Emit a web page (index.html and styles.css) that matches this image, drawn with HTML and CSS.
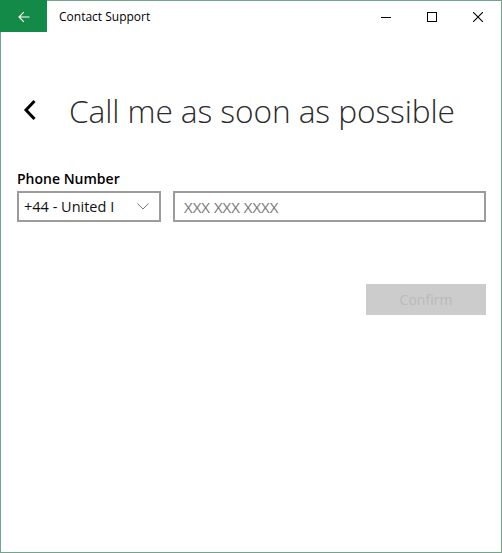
FILE: index.html
```html
<!DOCTYPE html>
<html lang="en">
<head>
<meta charset="utf-8">
<title>Contact Support</title>
<link rel="stylesheet" href="styles.css">
</head>
<body>
<div class="window">
  <header class="titlebar">
    <div class="back-btn">
      <svg width="12" height="12" viewBox="0 0 12 12"><path d="M11.5 6H1M5.8 1.2L1 6l4.8 4.8" fill="none" stroke="#fff" stroke-width="1.2"/></svg>
    </div>
    <div class="app-title">Contact Support</div>
    <div class="controls">
      <div class="ctl"><svg width="10" height="10" viewBox="0 0 10 10"><path d="M0 5.5h10" stroke="#000" stroke-width="1"/></svg></div>
      <div class="ctl"><svg width="10" height="10" viewBox="0 0 10 10"><rect x="0.5" y="0.5" width="9" height="9" fill="none" stroke="#000" stroke-width="1"/></svg></div>
      <div class="ctl"><svg width="10" height="10" viewBox="0 0 10 10"><path d="M0 0L10 10M10 0L0 10" stroke="#000" stroke-width="1.1"/></svg></div>
    </div>
  </header>
  <main class="content">
    <div class="heading-row">
      <svg class="chev" width="14" height="22" viewBox="0 0 14 22"><path d="M11.5 2L3 11l8.5 9" fill="none" stroke="#000" stroke-width="3"/></svg>
      <h1 class="heading">Call me as soon as possible</h1>
    </div>
    <div class="label">Phone Number</div>
    <div class="fields">
      <div class="select">
        <span class="select-text">+44 - United I</span>
        <svg width="12" height="7" viewBox="0 0 12 7"><path d="M0.5 0.5L6 6l5.5-5.5" fill="none" stroke="#777" stroke-width="1"/></svg>
      </div>
      <div class="input"><span class="placeholder">XXX XXX XXXX</span></div>
    </div>
    <div class="actions">
      <div class="confirm">Confirm</div>
    </div>
  </main>
</div>
</body>
</html>
```
FILE: styles.css
```css
html, body {
  margin: 0;
  padding: 0;
  background: #fff;
}
body {
  font-family: "Open Sans", "Noto Sans", sans-serif;
  color: #000;
}
.window {
  width: 502px;
  height: 553px;
  box-sizing: border-box;
  border: 1px solid #72a58c;
  display: flex;
  flex-direction: column;
}
.titlebar {
  height: 31px;
  display: flex;
  align-items: center;
}
.back-btn {
  width: 46px;
  height: 31px;
  background: #138a48;
  display: flex;
  align-items: center;
  justify-content: center;
  margin-left: -1px;
  margin-top: -1px;
  padding-top: 1px;
  padding-left: 1px;
}
.app-title {
  font-size: 12px;
  margin-left: 12px;
  flex: 1;
  color: #000;
}
.controls {
  display: flex;
  height: 31px;
}
.ctl {
  width: 46px;
  display: flex;
  align-items: center;
  justify-content: center;
}
.content {
  padding: 0 15px 0 16px;
  display: flex;
  flex-direction: column;
}
.heading-row {
  display: flex;
  align-items: center;
  margin-top: 58px;
  height: 40px;
}
.chev {
  margin-left: 6px;
  margin-right: 32px;
}
.heading {
  margin: 0;
  font-weight: 300;
  font-size: 31.7px;
  color: #2b2b2b;
  letter-spacing: -0.1px;
  white-space: nowrap;
}
.label {
  margin-top: 39px;
  font-size: 14px;
  font-weight: 600;
  line-height: 20px;
}
.fields {
  display: flex;
  gap: 12px;
  margin-top: 2px;
}
.select, .input {
  height: 31px;
  box-sizing: border-box;
  border: 2px solid #9c9c9c;
  display: flex;
  align-items: center;
}
.select {
  width: 144px;
  padding: 0 10px 0 5px;
  justify-content: space-between;
}
.select-text {
  font-size: 14.5px;
  color: #111;
}
.input {
  flex: 1;
  padding-left: 9px;
}
.placeholder {
  font-size: 15px;
  color: #777;
  letter-spacing: 0;
}
.actions {
  display: flex;
  justify-content: flex-end;
  margin-top: 62px;
}
.confirm {
  width: 120px;
  height: 31px;
  background: #cccccc;
  color: #bababa;
  font-size: 14px;
  display: flex;
  align-items: center;
  justify-content: center;
}
```
